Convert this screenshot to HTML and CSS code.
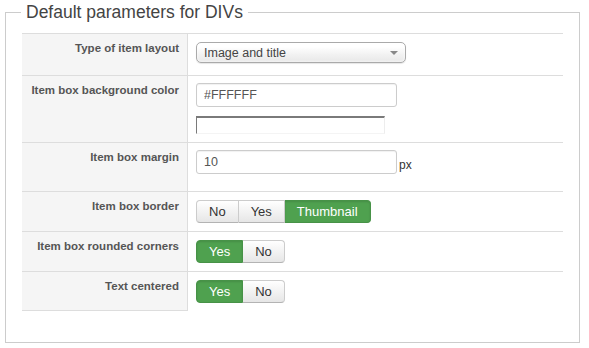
FILE: index.html
```html
<!DOCTYPE html>
<html lang="en">
<head>
  <meta charset="UTF-8">
  <title>Default parameters for DIVs</title>
  <link rel="stylesheet" href="styles.css">
</head>
<body>
  <fieldset class="params">
    <legend>Default parameters for DIVs</legend>

    <div class="grid">
      <div class="row row-select">
        <div class="label">Type of item layout</div>
        <div class="control">
          <div class="select">
            <span>Image and title</span>
            <span class="caret"></span>
          </div>
        </div>
      </div>

      <div class="row">
        <div class="label">Item box background color</div>
        <div class="control">
          <input type="text" class="input" value="#FFFFFF">
          <div class="swatch"></div>
        </div>
      </div>

      <div class="row">
        <div class="label">Item box margin</div>
        <div class="control">
          <input type="text" class="input" value="10"><span class="unit">px</span>
        </div>
      </div>

      <div class="row">
        <div class="label">Item box border</div>
        <div class="control">
          <div class="btn-group">
            <button class="btn">No</button>
            <button class="btn">Yes</button>
            <button class="btn active">Thumbnail</button>
          </div>
        </div>
      </div>

      <div class="row">
        <div class="label">Item box rounded corners</div>
        <div class="control">
          <div class="btn-group">
            <button class="btn active">Yes</button>
            <button class="btn">No</button>
          </div>
        </div>
      </div>

      <div class="row row-last">
        <div class="label">Text centered</div>
        <div class="control">
          <div class="btn-group">
            <button class="btn active">Yes</button>
            <button class="btn">No</button>
          </div>
        </div>
      </div>
    </div>
  </fieldset>
</body>
</html>
```

FILE: styles.css
```css
:root {
  --border: #dddddd;
  --label-bg: #f5f5f5;
  --label-text: #555555;
  --text: #333333;
  --green: #4fa14f;
}

* {
  box-sizing: border-box;
}

body {
  margin: 0;
  background: #fff;
  font-family: "Liberation Sans", Arial, sans-serif;
  color: var(--text);
}

.params {
  width: 575px;
  margin: 1px 0 0 5px;
  padding: 0 0 31px 0;
  border: 1px solid #cccccc;
}

.params legend {
  margin-left: 15px;
  padding: 0 5px;
  font-size: 17.5px;
  line-height: 22px;
  color: #444;
}

.grid {
  width: 541px;
  margin: 10px 0 0 16px;
}

.row {
  display: flex;
  border-top: 1px solid var(--border);
}

.label {
  width: 166px;
  flex-shrink: 0;
  padding: 5px 8px 0 8px;
  background: var(--label-bg);
  border-right: 1px solid var(--border);
  text-align: right;
  white-space: nowrap;
  font-size: 11.5px;
  font-weight: bold;
  line-height: 18px;
  color: var(--label-text);
}

.row-last .label {
  border-bottom: 1px solid var(--border);
}

.control {
  flex: 1;
  padding: 7px 7px 8px 8px;
  font-size: 12px;
}

/* dropdown */
.select {
  display: flex;
  align-items: center;
  justify-content: space-between;
  width: 210px;
  height: 21px;
  margin: 1px 0 4px 0;
  padding: 0 7px 0 7px;
  border: 1px solid #aaaaaa;
  border-radius: 5px;
  background: linear-gradient(#ffffff 20%, #f2f2f2 60%, #e8e8e8);
  box-shadow: 0 0 3px #fff inset, 0 1px 1px rgba(0,0,0,0.1);
  font-size: 12.5px;
  color: #444;
}

.caret {
  width: 0;
  height: 0;
  border-left: 4px solid transparent;
  border-right: 4px solid transparent;
  border-top: 4px solid #888;
  margin-top: 1px;
}

/* text inputs */
.input {
  display: inline-block;
  width: 201px;
  height: 24px;
  margin: 0 0 9px 0;
  padding: 0 7px;
  border: 1px solid #cccccc;
  border-radius: 3px;
  background: #fff;
  box-shadow: inset 0 1px 1px rgba(0,0,0,0.06);
  font-family: "Liberation Sans", Arial, sans-serif;
  font-size: 12.5px;
  color: #555;
  vertical-align: top;
}

.unit {
  display: inline-block;
  margin-left: 2px;
  padding-top: 8px;
  font-size: 12px;
  vertical-align: top;
}

.swatch {
  width: 189px;
  height: 18px;
  border: 1px solid;
  border-color: #7a7a7a #ededed #f4f4f4 #7a7a7a;
  border-top-width: 2px;
  background: #fff;
}

/* toggle buttons */
.btn-group {
  display: flex;
  margin-top: 1px;
}

.btn {
  height: 23px;
  padding: 0 12px;
  margin: 0;
  border: 1px solid #cccccc;
  border-bottom-color: #b3b3b3;
  border-left-width: 0;
  background: linear-gradient(#ffffff, #e6e6e6);
  font-family: "Liberation Sans", Arial, sans-serif;
  font-size: 13px;
  color: #333;
  line-height: 21px;
}

.btn:first-child {
  border-left-width: 1px;
  border-radius: 4px 0 0 4px;
}

.btn:last-child {
  border-radius: 0 4px 4px 0;
}

.btn.active {
  background: var(--green);
  border-color: #479247;
  color: #fff;
  box-shadow: inset 0 1px 2px rgba(0,0,0,0.12);
}
```
